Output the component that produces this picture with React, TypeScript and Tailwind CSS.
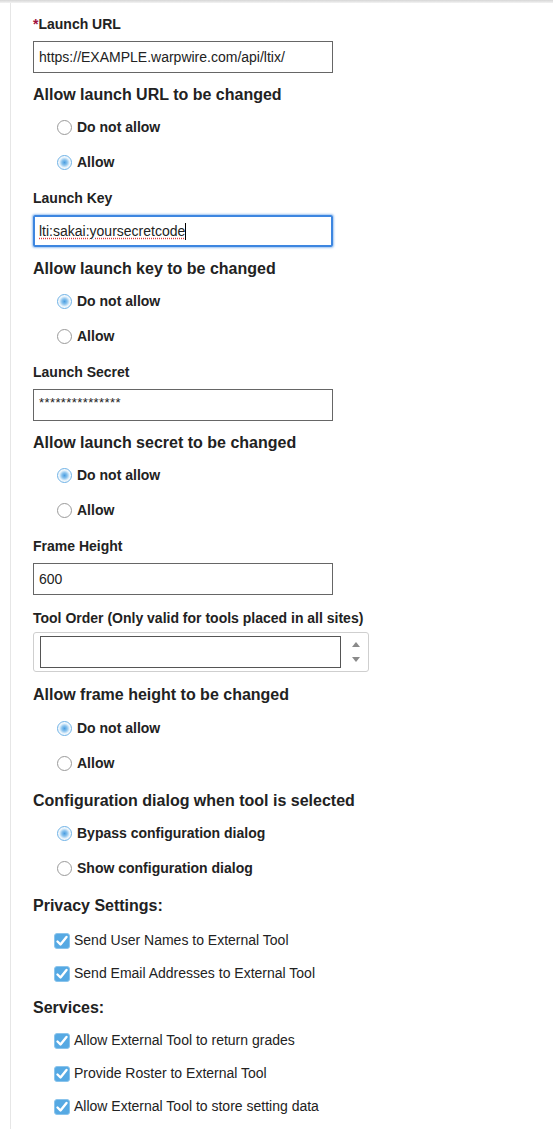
import React from 'react';

const font = "font-['Liberation_Sans',Arial,Helvetica,sans-serif]";

const Label = ({ children, className = '' }: { children: React.ReactNode; className?: string }) => (
  <div className={`h-[16px] leading-[16px] text-[14px] font-bold text-[#222] ${className}`}>{children}</div>
);

const Heading = ({ children, className = '' }: { children: React.ReactNode; className?: string }) => (
  <div className={`h-[20px] leading-[20px] text-[16px] font-bold text-[#222] ${className}`}>{children}</div>
);

const TextBox = ({ children, focused = false, className = '' }: { children?: React.ReactNode; focused?: boolean; className?: string }) => (
  <div
    className={
      focused
        ? `w-[300px] h-[32px] flex items-center pl-[5px] text-[14px] text-[#222] border-2 border-[#3d86e0] rounded-[2px] shadow-[0_0_2px_1px_rgba(80,150,230,0.55)] ${className}`
        : `w-[300px] h-[32px] flex items-center pl-[5px] text-[14px] text-[#222] border border-[#666] ${className}`
    }
  >
    {children}
  </div>
);

const Radio = ({ label, checked = false }: { label: string; checked?: boolean }) => (
  <div className="h-[35px] flex items-center pl-[24px]">
    {checked ? (
      <span className="w-[15px] h-[15px] rounded-full border border-[#6fb2e6] bg-[radial-gradient(circle,#4a9de0_0%,#8cc4ee_30%,#e6f2fb_55%,#ffffff_75%)] shrink-0" />
    ) : (
      <span className="w-[15px] h-[15px] rounded-full border border-[#9a9a9a] bg-white shrink-0" />
    )}
    <span className="ml-[5px] text-[14px] font-bold text-[#222]">{label}</span>
  </div>
);

const Check = ({ label }: { label: string }) => (
  <div className="h-[33px] flex items-center pl-[21px]">
    <span className="w-[16px] h-[16px] rounded-[3px] border border-[#8ac4ec] bg-[#56a9e3] flex items-center justify-center shrink-0">
      <svg width="14" height="14" viewBox="0 0 14 14">
        <path d="M2.5 7.5 L5.5 10.5 L11.5 3" fill="none" stroke="#fff" strokeWidth="2.4" strokeLinecap="round" strokeLinejoin="round" />
      </svg>
    </span>
    <span className="ml-[4px] text-[14px] text-[#222]">{label}</span>
  </div>
);

export default function App() {
  return (
    <div className={`min-h-screen bg-white ${font}`}>
      <div className="h-[3px] bg-gradient-to-b from-[#d6d6d6] to-[#f3f3f3]" />
      <div className="flex">
        <div className="w-[10px] shrink-0" />
        <div className="flex-1 border-l border-[#e6e6e6] pl-[22px] pt-[13px] pb-[10px]">
          {/* Launch URL */}
          <Label>
            <span className="text-[#a1123e]">*</span>Launch URL
          </Label>
          <TextBox className="mt-[9px]">https://EXAMPLE.warpwire.com/api/ltix/</TextBox>
          <Heading className="mt-[12px]">Allow launch URL to be changed</Heading>
          <div className="mt-[5px]">
            <Radio label="Do not allow" />
            <Radio label="Allow" checked />
          </div>

          {/* Launch Key */}
          <Label className="mt-[10px]">Launch Key</Label>
          <TextBox className="mt-[9px]" focused>
            <span className="underline decoration-dotted decoration-[#e03a3a] underline-offset-2 ml-[-1px]">lti:sakai:yoursecretcode</span>
            <span className="w-px h-[17px] bg-black" />
          </TextBox>
          <Heading className="mt-[12px]">Allow launch key to be changed</Heading>
          <div className="mt-[5px]">
            <Radio label="Do not allow" checked />
            <Radio label="Allow" />
          </div>

          {/* Launch Secret */}
          <Label className="mt-[10px]">Launch Secret</Label>
          <TextBox className="mt-[9px]">
            <span className="text-[13px] tracking-[0.4px] -mt-[4px]">***************</span>
          </TextBox>
          <Heading className="mt-[12px]">Allow launch secret to be changed</Heading>
          <div className="mt-[5px]">
            <Radio label="Do not allow" checked />
            <Radio label="Allow" />
          </div>

          {/* Frame Height */}
          <Label className="mt-[10px]">Frame Height</Label>
          <TextBox className="mt-[9px]">600</TextBox>

          <Label className="mt-[15px]">Tool Order (Only valid for tools placed in all sites)</Label>
          <div className="mt-[6px] w-[336px] h-[40px] flex items-center border border-[#cfcfcf] rounded-[3px] pl-[6px]">
            <div className="w-[301px] h-[32px] border border-[#555] bg-white" />
            <div className="flex-1 h-full flex flex-col items-center justify-between py-[9px] pl-[2px]">
              <svg width="8" height="5" viewBox="0 0 8 5">
                <path d="M0 5 L4 0 L8 5 Z" fill="#8a8a8a" />
              </svg>
              <svg width="8" height="5" viewBox="0 0 8 5">
                <path d="M0 0 L4 5 L8 0 Z" fill="#8a8a8a" />
              </svg>
            </div>
          </div>

          <Heading className="mt-[13px]">Allow frame height to be changed</Heading>
          <div className="mt-[6px]">
            <Radio label="Do not allow" checked />
            <Radio label="Allow" />
          </div>

          <Heading className="mt-[10px]">Configuration dialog when tool is selected</Heading>
          <div className="mt-[5px]">
            <Radio label="Bypass configuration dialog" checked />
            <Radio label="Show configuration dialog" />
          </div>

          <Heading className="mt-[10px]">Privacy Settings:</Heading>
          <div className="mt-[8px]">
            <Check label="Send User Names to External Tool" />
            <Check label="Send Email Addresses to External Tool" />
          </div>

          <Heading className="mt-[8px]">Services:</Heading>
          <div className="mt-[6px]">
            <Check label="Allow External Tool to return grades" />
            <Check label="Provide Roster to External Tool" />
            <Check label="Allow External Tool to store setting data" />
          </div>
        </div>
      </div>
    </div>
  );
}
